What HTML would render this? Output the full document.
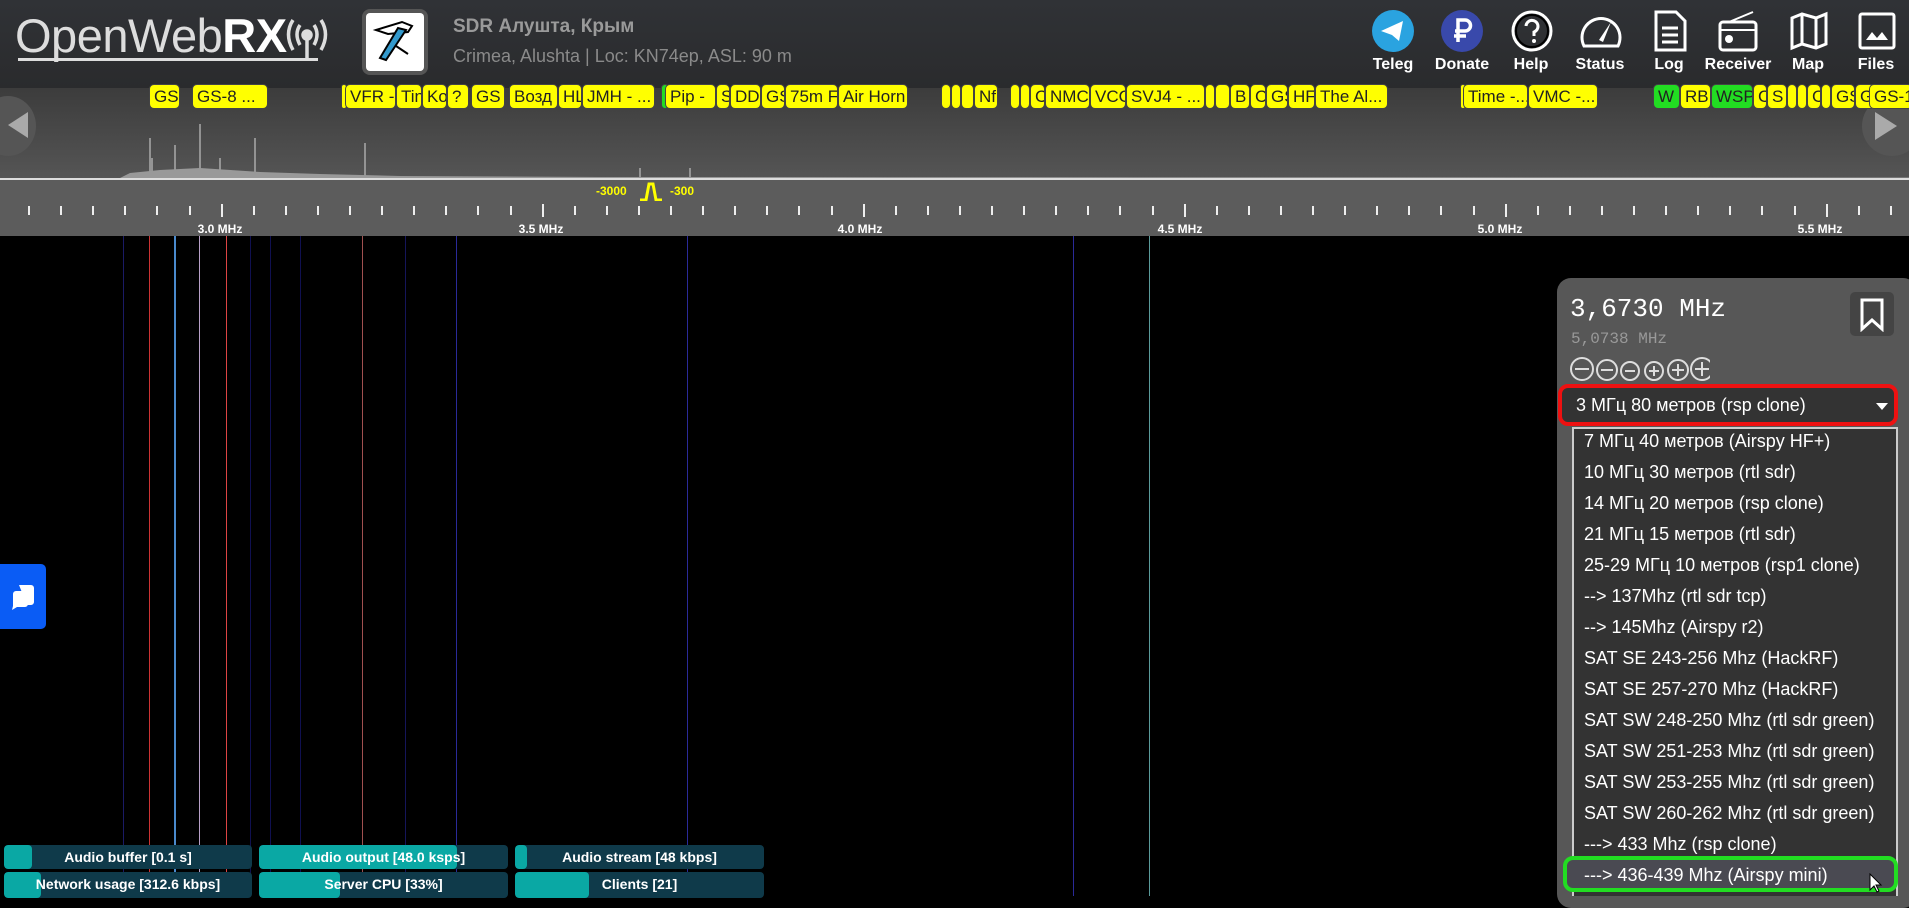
<!DOCTYPE html>
<html><head><meta charset="utf-8"><style>
*{box-sizing:border-box;margin:0;padding:0}
body{width:1909px;height:896px;overflow:hidden;background:#000;font-family:"Liberation Sans","DejaVu Sans",sans-serif;position:relative}
.a{position:absolute}
#hdr{left:0;top:0;width:1909px;height:88px;background:linear-gradient(#303236,#2a2b2d)}
#spec{left:0;top:88px;width:1909px;height:90px;background:linear-gradient(#3c3c3c,#555)}
#scale{left:0;top:178px;width:1909px;height:58px;background:#5c5c5c;border-top:2px solid #ddd}
.bm{position:absolute;top:84px;height:25px;background:#ff0;border:1px solid #444;border-radius:5px;color:#222;font-size:17px;line-height:23px;padding-left:4px;white-space:nowrap;overflow:hidden}
.bm.g{background:#2d2}
.tk{position:absolute;top:206px;width:2px;height:9px;background:#eee}
.tk.M{height:13px;top:204px}
.ml{position:absolute;top:222px;color:#fff;font-weight:bold;font-size:12px;transform:translateX(-50%)}
.ic{position:absolute;top:8px;width:46px;height:46px}
.lb{position:absolute;top:56px;color:#fff;font-weight:bold;font-size:16px;transform:translateX(-50%)}
.wl{position:absolute;top:236px;height:660px;width:2px}
#panel{left:1557px;top:278px;width:360px;height:630px;background:#575757;border-radius:14px}
.it{position:absolute;left:1584px;color:#fff;font-size:18px}
.sb{position:absolute;height:24px;background:#0f3a4a;border-radius:4px;color:#fff;font-weight:bold;font-size:14px;text-align:center;line-height:24px;overflow:hidden}
.sb i{position:absolute;left:0;top:0;bottom:0;background:#0aa8a4;border-radius:4px}
.sb span{position:relative}
</style></head><body>
<div class="a" id="hdr"></div>
<div class="a" style="left:15px;top:8px;color:#ddd;font-size:47px;letter-spacing:-0.5px">OpenWeb<b style="color:#fff">RX</b></div>
<div class="a" style="left:18px;top:58px;width:300px;height:3px;background:#ddd"></div>
<svg class="a" style="left:282px;top:14px" width="50" height="46" viewBox="0 0 50 46" fill="none" stroke="#ddd" stroke-width="3.5"><path d="M11 6 Q2 20 11 36M18 11Q12 20 18 31M39 6Q48 20 39 36M32 11Q38 20 32 31"/><circle cx="25" cy="21" r="4" fill="#ddd"/><path d="M25 24V44"/></svg>
<div class="a" style="left:362px;top:9px;width:66px;height:66px;background:#555;border-radius:8px"></div>
<div class="a" style="left:366px;top:13px;width:58px;height:58px;background:#fff;border-radius:4px"></div>
<svg class="a" style="left:368px;top:16px" width="54" height="52" viewBox="0 0 54 52"><path d="M8 14 L34 6 L44 10 L40 16 L20 18Z" fill="none" stroke="#000" stroke-width="2"/><path d="M38 14 L18 44 L12 42 L30 12Z" fill="#3399cc" stroke="#000" stroke-width="2"/><path d="M28 30 L40 38" stroke="#000" stroke-width="2"/></svg>
<div class="a" style="left:453px;top:16px;color:#9a9a9a;font-weight:bold;font-size:19px">SDR Алушта, Крым</div>
<div class="a" style="left:453px;top:46px;color:#8a8a8a;font-size:18px">Crimea, Alushta | Loc: KN74ep, ASL: 90 m</div>
<svg class="ic" style="left:1370px" viewBox="0 0 46 46"><circle cx="23" cy="23" r="21" fill="#2aa3e0"/><path d="M11 23 L33 13 L29 33 L22 27 Z" fill="#fff"/></svg>
<svg class="ic" style="left:1439px" viewBox="0 0 46 46"><circle cx="23" cy="23" r="21" fill="#3949ab"/><path d="M19 34V12h7a5 5 0 010 11h-10M15 28h12" stroke="#fff" stroke-width="3.5" fill="none"/></svg>
<svg class="ic" style="left:1509px" viewBox="0 0 46 46"><circle cx="23" cy="23" r="19" fill="none" stroke="#fff" stroke-width="3"/><circle cx="23" cy="23" r="16" fill="none" stroke="#000" stroke-width="2"/><path d="M17 18a6 6 0 1 1 8 6v4" fill="none" stroke="#fff" stroke-width="3"/><circle cx="25" cy="33" r="2" fill="#fff"/></svg>
<svg class="ic" style="left:1578px" viewBox="0 0 46 46"><path d="M6 38a19 19 0 1 1 34 0z" fill="none" stroke="#fff" stroke-width="3"/><path d="M21 32l12-18-8 20z" fill="#fff"/></svg>
<svg class="ic" style="left:1647px" viewBox="0 0 46 46"><path d="M9 4h20l9 9v29H9z" fill="none" stroke="#fff" stroke-width="3"/><path d="M15 20h16M15 27h16M15 34h16" stroke="#fff" stroke-width="3"/></svg>
<svg class="ic" style="left:1715px" viewBox="0 0 46 46"><path d="M14 14 L38 4" stroke="#fff" stroke-width="2"/><rect x="5" y="14" width="36" height="28" rx="3" fill="none" stroke="#fff" stroke-width="3"/><circle cx="14" cy="31" r="4" fill="#fff"/><path d="M5 22h36" stroke="#fff" stroke-width="2"/></svg>
<svg class="ic" style="left:1786px" viewBox="0 0 46 46"><path d="M6 10l10-4 14 4 10-4v30l-10 4-14-4-10 4z M16 6v30 M30 10v30" fill="none" stroke="#fff" stroke-width="3"/></svg>
<svg class="ic" style="left:1854px" viewBox="0 0 46 46"><rect x="6" y="6" width="34" height="34" rx="2" fill="none" stroke="#fff" stroke-width="3"/><path d="M12 32l6-8 5 6 5-6 6 8z" fill="#fff"/></svg>
<div class="lb" style="left:1393px">Teleg</div><div class="lb" style="left:1462px">Donate</div><div class="lb" style="left:1531px">Help</div><div class="lb" style="left:1600px">Status</div><div class="lb" style="left:1669px">Log</div><div class="lb" style="left:1738px">Receiver</div><div class="lb" style="left:1808px">Map</div><div class="lb" style="left:1876px">Files</div>
<div class="a" id="spec"></div>
<svg class="a" style="left:0;top:88px" width="1909" height="90"><g stroke="#aaa" stroke-width="1.5"><path d="M150 90V50M200 90V36M152 90V70M175 90V57M255 90V50M220 90V70M365 90V55M640 90V80M690 90V80"/></g><path d="M120 90 L130 85 L160 82 L200 80 L260 84 L320 86 L400 88 L600 89 L1909 89.5 L1909 90Z" fill="#999"/></svg>
<div class="a" style="left:-20px;top:96px;width:56px;height:60px;border-radius:50%;background:#555"></div>
<div class="a" style="left:8px;top:112px;border-right:20px solid #aaa;border-top:13px solid transparent;border-bottom:13px solid transparent"></div>
<div class="a" style="left:1862px;top:96px;width:60px;height:60px;border-radius:50%;background:#555"></div>
<div class="a" style="left:1875px;top:112px;border-left:22px solid #aaa;border-top:14px solid transparent;border-bottom:14px solid transparent"></div>
<div class="bm" style="left:149px;width:31px">GS</div><div class="bm" style="left:192px;width:76px">GS-8 ...</div>
<div class="bm" style="left:341px;width:4px"></div><div class="bm" style="left:345px;width:51px">VFR -</div><div class="bm" style="left:396px;width:26px">Tin</div><div class="bm" style="left:422px;width:25px">Ko</div><div class="bm" style="left:447px;width:22px">?</div><div class="bm" style="left:471px;width:34px">GS</div><div class="bm" style="left:509px;width:49px">Возд</div><div class="bm" style="left:558px;width:24px">HL</div><div class="bm" style="left:582px;width:73px">JMH - ...</div>
<div class="bm g" style="left:661px;width:8px"></div><div class="bm" style="left:665px;width:51px">Pip -</div><div class="bm" style="left:716px;width:14px">S</div><div class="bm" style="left:730px;width:31px">DD</div><div class="bm" style="left:761px;width:24px">GS</div><div class="bm" style="left:785px;width:53px">75m F</div><div class="bm" style="left:838px;width:70px">Air Horn</div>
<div class="bm" style="left:941px;width:10px"></div><div class="bm" style="left:951px;width:10px"></div><div class="bm" style="left:961px;width:13px"></div><div class="bm" style="left:974px;width:24px">Nf</div><div class="bm" style="left:1010px;width:10px"></div><div class="bm" style="left:1020px;width:10px"></div><div class="bm" style="left:1030px;width:15px">C</div><div class="bm" style="left:1045px;width:45px">NMC</div><div class="bm" style="left:1090px;width:36px">VCO</div><div class="bm" style="left:1126px;width:79px">SVJ4 - ...</div><div class="bm" style="left:1205px;width:10px"></div><div class="bm" style="left:1215px;width:15px"></div><div class="bm" style="left:1230px;width:20px">B</div><div class="bm" style="left:1250px;width:16px">C</div><div class="bm" style="left:1266px;width:22px">GS</div><div class="bm" style="left:1288px;width:27px">HF</div><div class="bm" style="left:1315px;width:73px">The Al...</div>
<div class="bm" style="left:1460px;width:4px"></div><div class="bm" style="left:1463px;width:65px">Time -...</div><div class="bm" style="left:1528px;width:70px">VMC -...</div>
<div class="bm g" style="left:1653px;width:27px">W</div><div class="bm" style="left:1680px;width:31px">RB</div><div class="bm g" style="left:1711px;width:42px">WSPI</div><div class="bm" style="left:1753px;width:14px">C</div><div class="bm" style="left:1767px;width:20px">S</div><div class="bm" style="left:1787px;width:10px"></div><div class="bm" style="left:1797px;width:10px"></div><div class="bm" style="left:1807px;width:14px">C</div><div class="bm" style="left:1821px;width:10px"></div><div class="bm" style="left:1831px;width:24px">GS</div><div class="bm" style="left:1855px;width:20px">G</div><div class="bm" style="left:1869px;width:44px">GS-1</div>
<div class="a" id="scale"></div>
<div class="a" style="left:596px;top:184px;color:#ff0;font-weight:bold;font-size:12px">-3000</div>
<svg class="a" style="left:638px;top:181px" width="26" height="20"><path d="M2 19 L8 19 L11 3 L15 3 L18 19 L24 19" fill="none" stroke="#ff0" stroke-width="3"/></svg>
<div class="a" style="left:670px;top:184px;color:#ff0;font-weight:bold;font-size:12px">-300</div>
<div id="ticks"></div>
<script>
var h='';for(var i=0;i<60;i++){var x=28+i*32.1;if(x>1890)break;var M=(i%10==6);h+='<div class="tk'+(M?' M':'')+'" style="left:'+x.toFixed(0)+'px"></div>';}
document.getElementById('ticks').innerHTML=h;
</script>
<div class="ml" style="left:220px">3.0 MHz</div><div class="ml" style="left:541px">3.5 MHz</div><div class="ml" style="left:860px">4.0 MHz</div><div class="ml" style="left:1180px">4.5 MHz</div><div class="ml" style="left:1500px">5.0 MHz</div><div class="ml" style="left:1820px">5.5 MHz</div>
<div class="wl" style="left:123px;background:#1a1a66;width:1px"></div>
<div class="wl" style="left:149px;background:#c33;width:1px"></div>
<div class="wl" style="left:174px;background:#4a8acc"></div>
<div class="wl" style="left:199px;background:#b8a0c8;width:1px"></div>
<div class="wl" style="left:226px;background:#d44;width:1px"></div>
<div class="wl" style="left:250px;background:#101050;width:1px"></div>
<div class="wl" style="left:270px;background:#101050;width:1px"></div>
<div class="wl" style="left:300px;background:#101050;width:1px"></div>
<div class="wl" style="left:362px;background:#a05050;width:1px"></div>
<div class="wl" style="left:405px;background:#15155a;width:1px"></div>
<div class="wl" style="left:456px;background:#2a2a99;width:1px"></div>
<div class="wl" style="left:687px;background:#2a2a99;width:1px"></div>
<div class="wl" style="left:1073px;background:#2a2a99;width:1px"></div>
<div class="wl" style="left:1149px;background:#5a9a9a;width:1px"></div>
<div class="a" style="left:0;top:564px;width:46px;height:65px;background:#0a5cf5;border-radius:0 5px 5px 0"></div>
<svg class="a" style="left:9px;top:582px" width="28" height="30"><path d="M10 3h12a3 3 0 013 3v14a3 3 0 01-3 3h-4M6 9h10a3 3 0 013 3v10a3 3 0 01-3 3H8l-5 3 1-4V12a3 3 0 013-3" fill="#fff"/></svg>
<div class="sb" style="left:4px;top:845px;width:248px"><i style="width:28px"></i><span>Audio buffer [0.1 s]</span></div>
<div class="sb" style="left:259px;top:845px;width:249px"><i style="width:198px"></i><span>Audio output [48.0 ksps]</span></div>
<div class="sb" style="left:515px;top:845px;width:249px"><i style="width:12px"></i><span>Audio stream [48 kbps]</span></div>
<div class="sb" style="left:4px;top:872px;width:248px;height:26px"><i style="width:37px"></i><span>Network usage [312.6 kbps]</span></div>
<div class="sb" style="left:259px;top:872px;width:249px;height:26px"><i style="width:81px"></i><span>Server CPU [33%]</span></div>
<div class="sb" style="left:515px;top:872px;width:249px;height:26px"><i style="width:74px"></i><span>Clients [21]</span></div>
<div class="a" id="panel"></div>
<div class="a" style="left:1570px;top:294px;color:#fff;font-family:'Liberation Mono',monospace;font-size:26px">3,6730 MHz</div>
<div class="a" style="left:1571px;top:330px;color:#999;font-family:'Liberation Mono',monospace;font-size:16px">5,0738 MHz</div>
<div class="a" style="left:1850px;top:292px;width:44px;height:44px;background:#444;border-radius:5px"></div>
<svg class="a" style="left:1859px;top:298px" width="26" height="34"><path d="M3 2h20v29l-10-9-10 9z" fill="none" stroke="#fff" stroke-width="3"/></svg>
<svg class="a" style="left:1570px;top:356px" width="140" height="26" fill="none" stroke="#ddd" stroke-width="2"><circle cx="12" cy="13" r="11"/><path d="M5 13h14"/><circle cx="37" cy="14" r="10"/><path d="M31 14h12"/><circle cx="60" cy="15" r="9"/><path d="M55 15h10"/><circle cx="84" cy="15" r="9"/><path d="M79 15h10M84 10v10"/><circle cx="108" cy="14" r="10"/><path d="M102 14h12M108 8v12"/><circle cx="132" cy="13" r="11"/><path d="M125 13h14M132 6v14"/></svg>
<div class="a" style="left:1558px;top:384px;width:340px;height:42px;border:4px solid #e11;border-radius:10px;background:#333"></div>
<div class="a" style="left:1576px;top:395px;color:#fff;font-size:18px">3 МГц 80 метров (rsp clone)</div>
<div class="a" style="left:1876px;top:403px;border-top:7px solid #fff;border-left:6px solid transparent;border-right:6px solid transparent"></div>
<div class="a" style="left:1572px;top:427px;width:326px;height:469px;background:#333;border:2px solid #ccc;border-bottom:none"></div>
<div class="it" style="top:431px">7 МГц 40 метров (Airspy HF+)</div>
<div class="it" style="top:462px">10 МГц 30 метров (rtl sdr)</div>
<div class="it" style="top:493px">14 МГц 20 метров (rsp clone)</div>
<div class="it" style="top:524px">21 МГц 15 метров (rtl sdr)</div>
<div class="it" style="top:555px">25-29 МГц 10 метров (rsp1 clone)</div>
<div class="it" style="top:586px">--&gt; 137Mhz (rtl sdr tcp)</div>
<div class="it" style="top:617px">--&gt; 145Mhz (Airspy r2)</div>
<div class="it" style="top:648px">SAT SE 243-256 Mhz (HackRF)</div>
<div class="it" style="top:679px">SAT SE 257-270 Mhz (HackRF)</div>
<div class="it" style="top:710px">SAT SW 248-250 Mhz (rtl sdr green)</div>
<div class="it" style="top:741px">SAT SW 251-253 Mhz (rtl sdr green)</div>
<div class="it" style="top:772px">SAT SW 253-255 Mhz (rtl sdr green)</div>
<div class="it" style="top:803px">SAT SW 260-262 Mhz (rtl sdr green)</div>
<div class="it" style="top:834px">---&gt; 433 Mhz (rsp clone)</div>
<div class="a" style="left:1563px;top:856px;width:335px;height:36px;border:4px solid #2d2;border-radius:10px;background:#4a4a52"></div>
<div class="it" style="top:865px">---&gt; 436-439 Mhz (Airspy mini)</div>
<svg class="a" style="left:1869px;top:873px" width="14" height="20"><path d="M1 1v16l4-4 3 6 2-1-3-6h5z" fill="#fff" stroke="#000"/></svg>
</body></html>
